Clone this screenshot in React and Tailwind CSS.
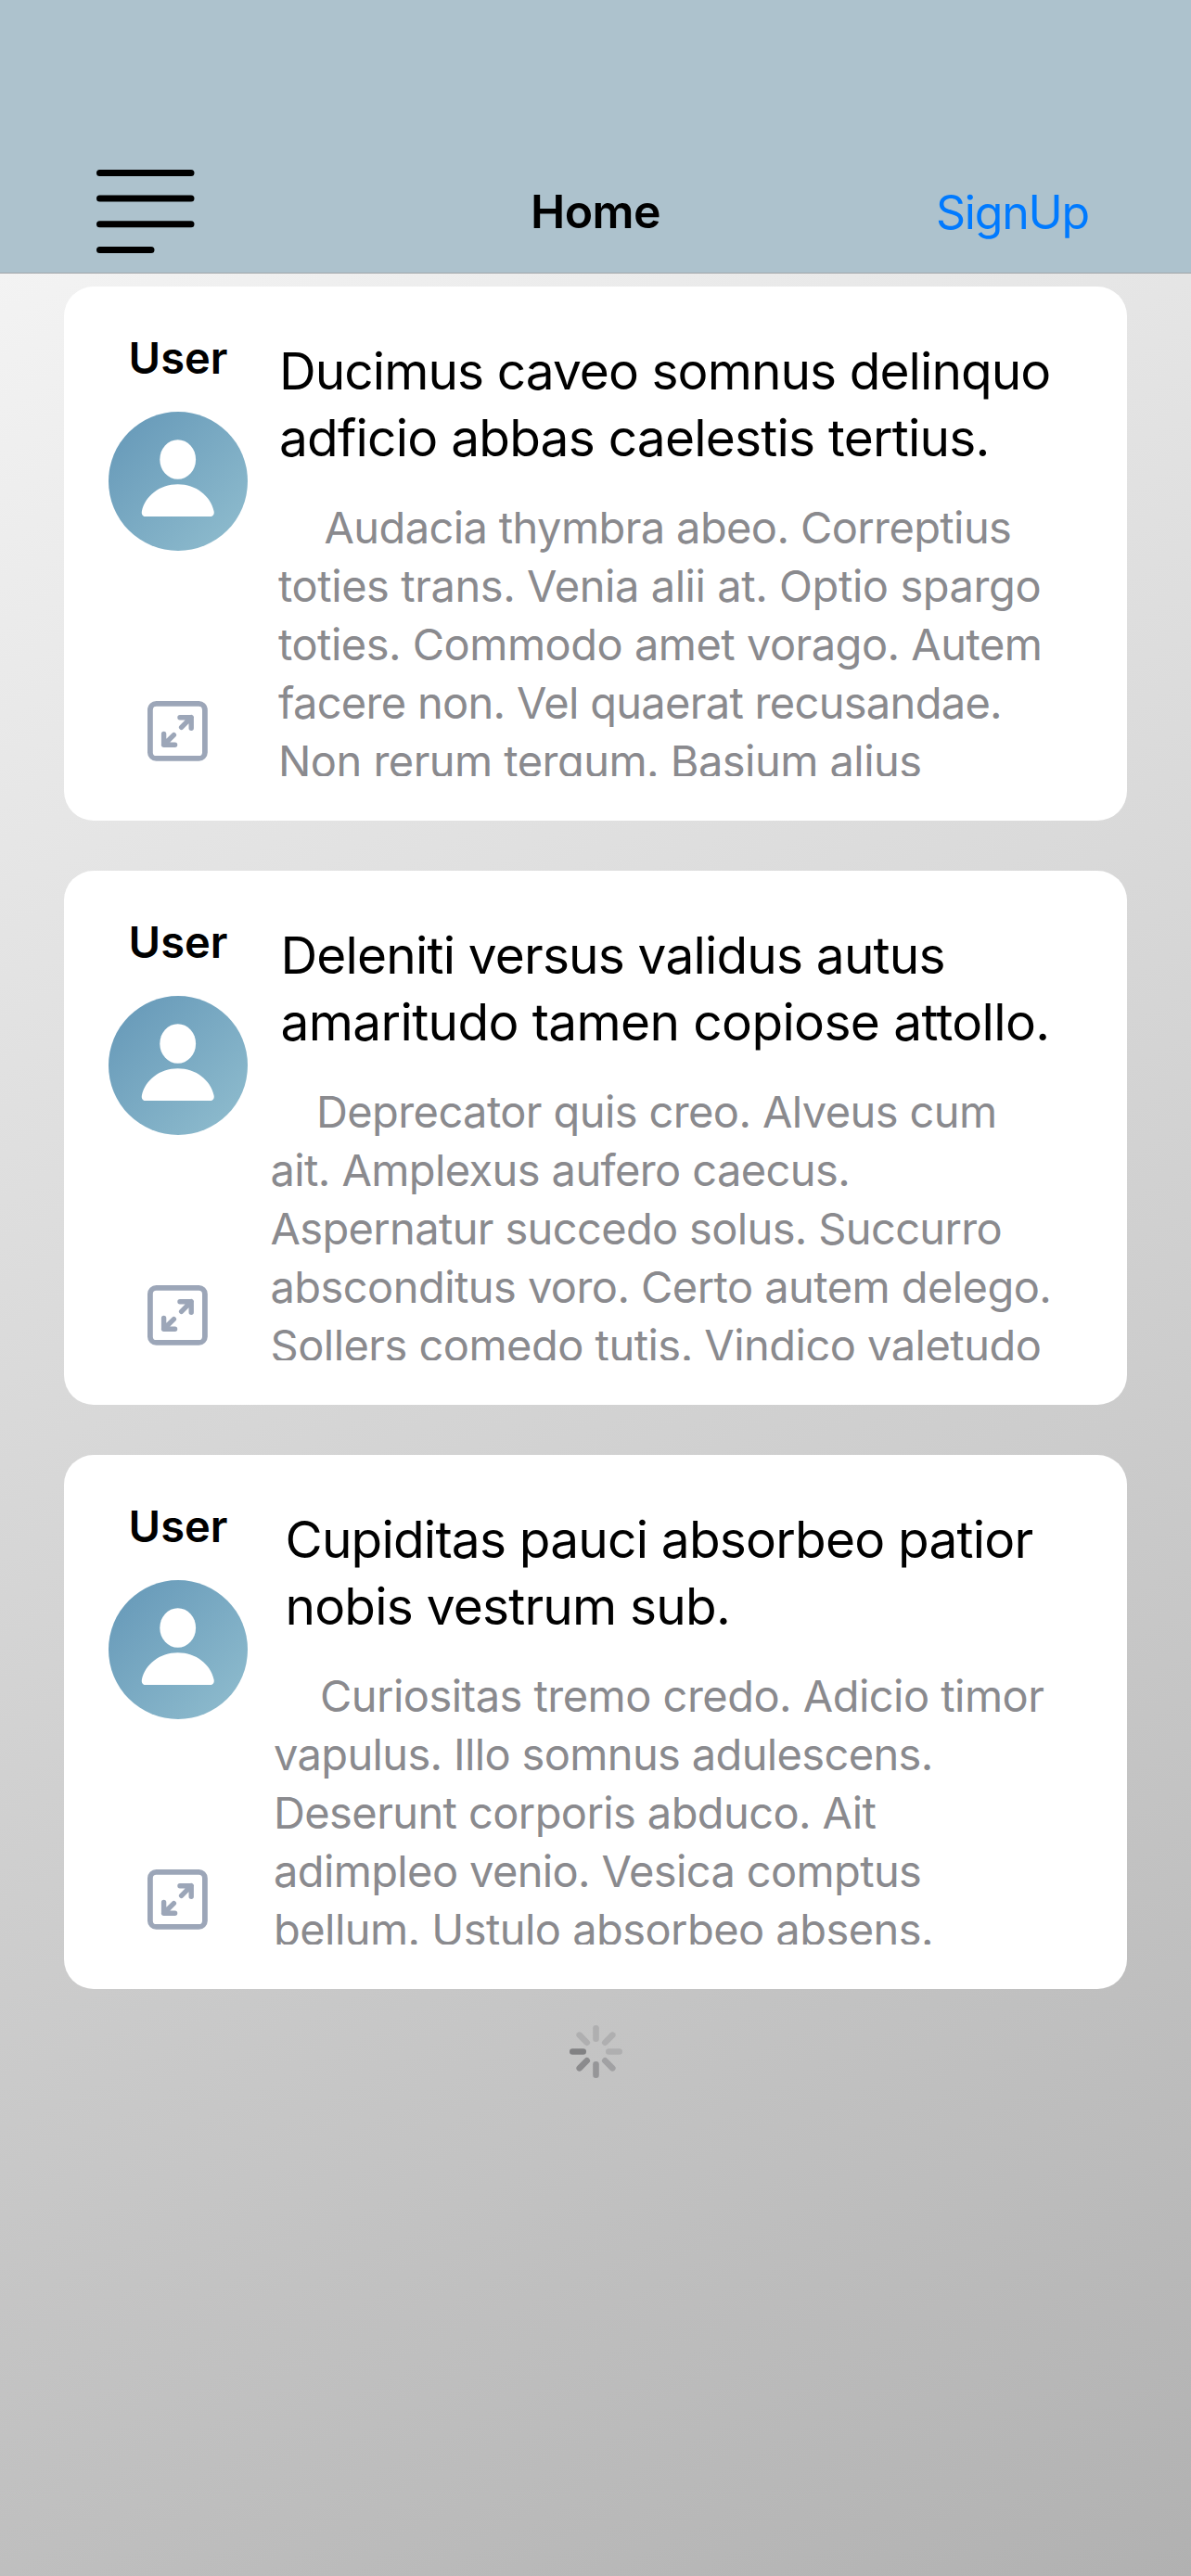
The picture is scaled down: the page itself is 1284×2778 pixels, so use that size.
import React from "react";

const posts = [
  {
    titleBox: "pl-[34px]",
    bodyBox: "pl-[33px]",
    title: [
      ["Ducimus caveo somnus delinquo", "tracking-[-0.93px]"],
      ["adficio abbas caelestis tertius.", "tracking-[-0.78px]"],
    ],
    body: [
      ["Audacia thymbra abeo. Correptius", "pl-[49.5px] tracking-[-0.61px]"],
      ["toties trans. Venia alii at. Optio spargo", "tracking-[-0.43px]"],
      ["toties. Commodo amet vorago. Autem", "tracking-[-0.51px]"],
      ["facere non. Vel quaerat recusandae.", "tracking-[-0.7px]"],
      ["Non rerum terqum. Basium alius", "tracking-[-0.54px]"],
    ],
  },
  {
    titleBox: "pl-[35.5px]",
    bodyBox: "pl-[24.5px]",
    title: [
      ["Deleniti versus validus autus", "tracking-[-0.83px]"],
      ["amaritudo tamen copiose attollo.", "tracking-[-0.63px]"],
    ],
    body: [
      ["Deprecator quis creo. Alveus cum", "pl-[49.5px] tracking-[-0.6px]"],
      ["ait. Amplexus aufero caecus.", "tracking-[-0.6px]"],
      ["Aspernatur succedo solus. Succurro", "tracking-[-0.65px]"],
      ["absconditus voro. Certo autem delego.", "tracking-[-0.56px]"],
      ["Sollers comedo tutis. Vindico valetudo", "tracking-[-0.53px]"],
    ],
  },
  {
    titleBox: "pl-[40.5px]",
    bodyBox: "pl-[28px]",
    title: [
      ["Cupiditas pauci absorbeo patior", "tracking-[-0.8px]"],
      ["nobis vestrum sub.", "tracking-[-0.8px]"],
    ],
    body: [
      ["Curiositas tremo credo. Adicio timor", "pl-[50px] tracking-[-0.53px]"],
      ["vapulus. Illo somnus adulescens.", "tracking-[-0.65px]"],
      ["Deserunt corporis abduco. Ait", "tracking-[-0.6px]"],
      ["adimpleo venio. Vesica comptus", "tracking-[-0.63px]"],
      ["bellum. Ustulo absorbeo absens.", "tracking-[-0.55px]"],
    ],
  },
];

function MenuIcon() {
  return (
    <svg className="block h-[92px] w-[106px]" viewBox="0 0 106 92" stroke="#000" strokeWidth="7" strokeLinecap="round">
      <path d="M3.5 4.5H102M3.5 32.1H102M3.5 59.8H102M3.5 87.6H59" />
    </svg>
  );
}

function Avatar() {
  return (
    <div className="flex size-[150px] shrink-0 rounded-full bg-linear-to-br from-[#6497b7] to-[#91becf]">
      <svg className="block size-full" viewBox="0 0 150 150" fill="#fff">
        <ellipse cx="74.7" cy="51.5" rx="19.4" ry="21.3" />
        <path d="M74.7 78.3C55 78.3 39.5 91 35.9 107.2C35.3 110.3 36.8 113 39.5 113H110C112.7 113 114.3 110.3 113.6 107.2C110 91 94.5 78.3 74.7 78.3Z" />
      </svg>
    </div>
  );
}

function ExpandIcon() {
  return (
    <svg className="block size-[66px]" viewBox="0 0 66 66" fill="none" stroke="#9ca6b8" strokeWidth="5.4" strokeLinecap="round" strokeLinejoin="round">
      <rect x="2.9" y="2.9" width="59" height="59" rx="6.5" strokeWidth="5.8" />
      <path d="M35 17.7H47.2V29.2M47.2 17.7L36.6 28.3" />
      <path d="M17.6 35.4V47.2H29.6M17.6 47.2L28.4 36.6" />
    </svg>
  );
}

function Card({ post }) {
  return (
    <article className="flex h-[576px] rounded-[32px] bg-white p-[48px]">
      <div className="flex w-[150px] shrink-0 flex-col items-center">
        <div className="mb-[29px] text-[47px] leading-[58px] font-semibold">User</div>
        <Avatar />
        <div className="mt-auto mb-[15px]">
          <ExpandIcon />
        </div>
      </div>
      <div className="flex min-w-0 flex-1 flex-col overflow-hidden pt-[6.5px] whitespace-pre">
        <h2 className={`text-[55px] leading-[72px] ${post.titleBox}`}>
          {post.title.map(([text, style]) => (
            <span key={text} className={`block ${style}`}>{text}</span>
          ))}
        </h2>
        <p className={`mt-[29px] text-[47px] leading-[63px] text-[#8a8a8e] ${post.bodyBox}`}>
          {post.body.map(([text, style]) => (
            <span key={text} className={`block ${style}`}>{text}</span>
          ))}
        </p>
      </div>
    </article>
  );
}

function Spinner() {
  const shades = ["#afafb0", "#afafb0", "#afafb0", "#a1a1a3", "#969698", "#8b8b8d", "#818183", "#afafb0"];
  return (
    <svg className="block size-[60px]" viewBox="-30.5 -30.5 60 60" strokeWidth="6.6" strokeLinecap="round">
      {shades.map((shade, i) => (
        <line key={i} x1="0" y1="-13.8" x2="0" y2="-25.2" stroke={shade} transform={`rotate(${i * 45})`} />
      ))}
    </svg>
  );
}

export default function App() {
  return (
    <div className="flex h-[2778px] w-[1284px] flex-col overflow-hidden font-['Inter',sans-serif] text-black">
      <header className="h-[295px] shrink-0 border-b border-[#a1a5a8] bg-[#adc2cd] pt-[182px]">
        <div className="grid h-[92px] grid-cols-3 items-center pr-[110px] pl-[104px]">
          <MenuIcon />
          <h1 className="pl-[6px] text-center text-[50px] leading-[60px] font-semibold tracking-[-0.58px]">Home</h1>
          <a className="justify-self-end pt-[1px] text-[50px] leading-[60px] tracking-[-1.2px] text-[#007aff]">SignUp</a>
        </div>
      </header>
      <main className="flex flex-1 flex-col gap-[54px] bg-[linear-gradient(152.7deg,#f3f3f3,#b1b1b1)] px-[69px] pt-[14px]">
        {posts.map((post) => (
          <Card key={post.title[0][0]} post={post} />
        ))}
        <div className="-mt-[17px] flex justify-center">
          <Spinner />
        </div>
      </main>
    </div>
  );
}
